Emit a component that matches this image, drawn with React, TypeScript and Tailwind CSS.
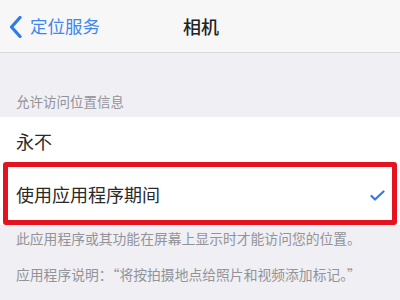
import React from 'react';

const font = { fontFamily: '"Noto Sans CJK SC", "Noto Sans", sans-serif' };

const App: React.FC = () => {
  return (
    <div className="w-[400px] h-[300px] overflow-hidden bg-[#efeff4]" style={font}>
      {/* Nav bar */}
      <div className="relative h-[53px] bg-[#f7f7f7] border-b border-[#d8d8dc] flex items-center">
        <div className="flex items-center pl-[9px] text-[#3f86ee]">
          <svg width="13" height="22" viewBox="0 0 13 22" className="mr-[8px] mt-[1px]">
            <polyline points="11,1.5 2.5,11 11,20.5" fill="none" stroke="#2f7bea" strokeWidth="3.2" strokeLinecap="round" strokeLinejoin="round" />
          </svg>
          <span className="text-[17.5px] leading-[22px]">定位服务</span>
        </div>
        <span className="absolute left-1/2 -translate-x-1/2 pl-[2px] text-[18px] leading-[22px] font-medium text-[#222]">相机</span>
      </div>

      {/* Section header */}
      <div className="h-[64px] flex items-end px-[16px] pb-[8px]">
        <span className="text-[13.5px] leading-[16px] text-[#939398]">允许访问位置信息</span>
      </div>

      {/* Options */}
      <div className="bg-white">
        <div className="h-[45px] flex items-center px-[16px] pt-[3px]">
          <span className="text-[18px] leading-[22px] text-[#2a2a2a]">永不</span>
        </div>
        <div className="mx-[3px] h-[63px] border-[5px] border-[#e3141f] rounded-[3px] flex items-center justify-between pl-[8px] pr-[7px]">
          <span className="text-[18px] leading-[22px] text-[#2a2a2a]">使用应用程序期间</span>
          <svg width="15" height="11" viewBox="0 0 15 11" className="mt-[3px]">
            <polyline points="1.5,6 5,9.5 13.5,1.5" fill="none" stroke="#2f7bea" strokeWidth="2.2" strokeLinecap="round" strokeLinejoin="round" />
          </svg>
        </div>
      </div>

      {/* Footer notes */}
      <div className="px-[16px] pt-[4px] text-[13.8px] leading-[18px] text-[#939398]">
        <p>此应用程序或其功能在屏幕上显示时才能访问您的位置。</p>
        <p className="mt-[18px]">应用程序说明：“将按拍摄地点给照片和视频添加标记。”</p>
      </div>
    </div>
  );
};

export default App;
